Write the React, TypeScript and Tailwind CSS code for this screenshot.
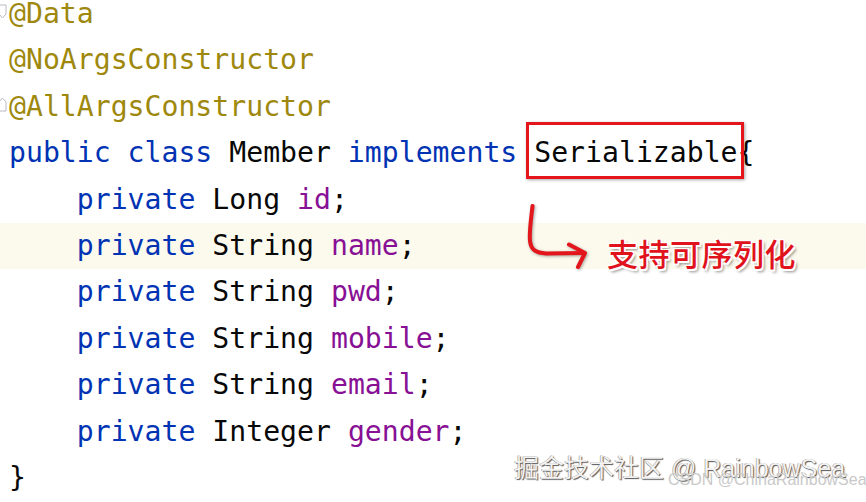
import React from "react";

const A = ({ children }: { children: React.ReactNode }) => <span className="text-[#9e880d]">{children}</span>;
const K = ({ children }: { children: React.ReactNode }) => <span className="text-[#0033b3]">{children}</span>;
const F = ({ children }: { children: React.ReactNode }) => <span className="text-[#871094]">{children}</span>;

function Line({ children, hl = false, indent = false }: { children?: React.ReactNode; hl?: boolean; indent?: boolean }) {
  return (
    <div className={`h-[46.4px] whitespace-pre ${hl ? "bg-[#fcfaed]" : ""} ${indent ? "pl-[76.8px]" : "pl-[9px]"}`}>
      {children}
    </div>
  );
}

export default function App() {
  return (
    <div className="relative w-[866px] h-[502px] overflow-hidden bg-white text-[#080808]">
      <div className="-mt-[9px] font-['DejaVu_Sans_Mono',monospace] text-[28.15px] leading-[46.4px]">
        <Line><A>@Data</A></Line>
        <Line><A>@NoArgsConstructor</A></Line>
        <Line><A>@AllArgsConstructor</A></Line>
        <Line><K>public class</K> Member <K>implements</K> Serializable{"{"}</Line>
        <Line indent><K>private</K> Long <F>id</F>;</Line>
        <Line indent hl><K>private</K> String <F>name</F>;</Line>
        <Line indent><K>private</K> String <F>pwd</F>;</Line>
        <Line indent><K>private</K> String <F>mobile</F>;</Line>
        <Line indent><K>private</K> String <F>email</F>;</Line>
        <Line indent><K>private</K> Integer <F>gender</F>;</Line>
        <Line>{"}"}</Line>
      </div>

      {/* gutter fold markers */}
      <svg className="absolute left-0 top-[4px]" width="7" height="16" viewBox="0 0 7 16">
        <path d="M-1 1 H6 V10 L2.5 14 L-1 10 Z" fill="none" stroke="#b8b8c4" strokeWidth="1" />
      </svg>
      <svg className="absolute left-0 top-[96px]" width="7" height="16" viewBox="0 0 7 16">
        <path d="M-1 15 H6 V6 L2.5 2 L-1 6 Z" fill="none" stroke="#b8b8c4" strokeWidth="1" />
      </svg>

      {/* red box */}
      <div className="absolute left-[526px] top-[122px] w-[218px] h-[57px] border-[3.5px] border-[#e5151c] shadow-[1px_1px_3px_rgba(0,0,0,0.35)]" />

      {/* arrow */}
      <svg className="absolute left-0 top-0" width="866" height="502" viewBox="0 0 866 502">
        <g fill="none" stroke="#e3161c" strokeWidth="4" strokeLinecap="round" strokeLinejoin="round" style={{ filter: "drop-shadow(1px 1px 1.5px rgba(0,0,0,0.35))" }}>
          <path d="M532.5 206 C531 220 529 232 530 241 C531 250 536 253 546 253.5 L584 253" />
          <path d="M569 244.5 L585 253 L578 267" />
        </g>
      </svg>

      {/* red label */}
      <div className="absolute left-[607px] top-[237px] font-['Noto_Sans_CJK_SC',sans-serif] text-[31px] leading-none font-medium text-[#e0121c] tracking-[0.5px] [text-shadow:-1.5px_-1.5px_0_#fff,1.5px_-1.5px_0_#fff,-1.5px_1.5px_0_#fff,1.5px_1.5px_0_#fff,2.5px_3px_3px_rgba(0,0,0,0.45)]">
        支持可序列化
      </div>

      {/* watermarks */}
      <div className="absolute left-[514px] top-[456px] font-['Liberation_Sans','Noto_Sans_CJK_SC',sans-serif] text-[25px] leading-none whitespace-nowrap text-[#f2f2f2] [text-shadow:1px_1px_1px_#555,-0.5px_-0.5px_0.5px_#888]">
        掘金技术社区 @ RainbowSea
      </div>
      <div className="absolute left-[668px] top-[472px] font-['Liberation_Sans',sans-serif] text-[16px] leading-none whitespace-nowrap text-[#c9c9c9]">
        CSDN @ChinaRainbowSea
      </div>
    </div>
  );
}
